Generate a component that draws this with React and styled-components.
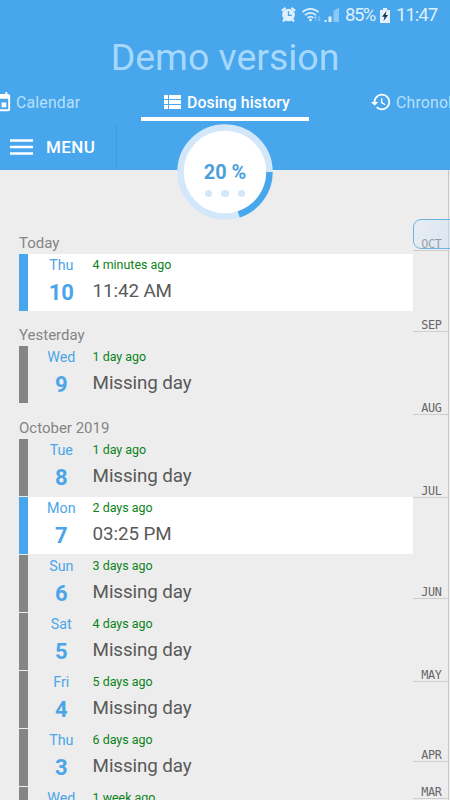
import React from 'react';
import styled, { createGlobalStyle } from 'styled-components';

const BLUE = '#47a6ec';

const Global = createGlobalStyle`
  * { box-sizing: border-box; }
  body { margin: 0; background: #ededed; font-family: Roboto, "Liberation Sans", sans-serif; }
`;

const Screen = styled.div`
  position: relative;
  width: 450px;
  height: 800px;
  overflow: hidden;
  background: #ededed;
`;

const Header = styled.header`
  height: 170px;
  background: ${BLUE};
  color: #fff;
`;

const StatusBar = styled.div`
  display: flex;
  align-items: center;
  height: 30px;
  padding-left: 280px;
  color: #dff0fd;
  svg { flex: none; display: block; }
`;

const StatusText = styled.span`
  width: ${(p) => p.$width}px;
  margin-left: ${(p) => p.$gap}px;
  font-size: 18.5px;
  line-height: 30px;
  letter-spacing: ${(p) => p.$spacing}px;
  white-space: nowrap;
`;

const Title = styled.h1`
  margin: 0;
  height: 57px;
  text-align: center;
  font-size: 37.5px;
  font-weight: 400;
  line-height: 55px;
  letter-spacing: -0.04px;
  color: #a6d8fc;
`;

const Tabs = styled.nav`
  display: grid;
  grid-template-columns: 141px 168px 141px;
  height: 34px;
`;

const Tab = styled.div`
  display: flex;
  align-items: center;
  gap: ${(p) => p.$gap}px;
  min-width: 0;
  overflow: hidden;
  padding-left: ${(p) => p.$indent || 0}px;
  border-bottom: 4px solid ${(p) => (p.$active ? '#fff' : 'transparent')};
  font-size: 15.8px;
  font-weight: ${(p) => (p.$active ? 500 : 400)};
  letter-spacing: ${(p) => (p.$active ? 0.1 : 0.2)}px;
  white-space: nowrap;
  color: ${(p) => (p.$active ? '#fff' : '#b9e0fb')};
  svg { flex: none; display: block; fill: #fff; }
`;

const TabLabel = styled.span`
  line-height: 20px;
  padding-top: 2px;
`;

const CutIcon = styled.span`
  margin: 0 0 0 -10px;
`;

const MenuButton = styled.div`
  display: flex;
  align-items: center;
  gap: 13px;
  width: 117px;
  height: 46px;
  margin-top: 3px;
  padding-left: 10px;
  border-right: 1px solid #3f9ce2;
  font-size: 17px;
  font-weight: 500;
  letter-spacing: 0.4px;
`;

const Ring = styled.div`
  position: absolute;
  left: 177px;
  top: 124px;
  width: 96px;
  height: 96px;
  display: flex;
  flex-direction: column;
  align-items: center;
  color: #4a9fdb;
  svg { position: absolute; inset: 0; }
`;

const RingValue = styled.span`
  position: relative;
  margin-top: 34px;
  font-size: 19.9px;
  font-weight: 700;
  line-height: 30px;
`;

const Dots = styled.div`
  position: relative;
  display: flex;
  gap: 9px;
  margin-top: 2px;
`;

const Dot = styled.i`
  width: 7.4px;
  height: 7.4px;
  border-radius: 50%;
  background: #d3e7fa;
`;

const Content = styled.main`
  display: flex;
  height: 630px;
`;

const List = styled.div`
  width: 394px;
  margin-left: 19px;
  padding-top: 49px;
`;

const SectionTitle = styled.h2`
  margin: 0;
  height: ${(p) => p.$height}px;
  padding-top: ${(p) => p.$height - 22}px;
  font-size: 15px;
  font-weight: 400;
  line-height: 22px;
  color: #858585;
`;

const Row = styled.div`
  display: flex;
  height: 57px;
  margin-bottom: 1px;
  border-left: 9px solid ${(p) => (p.$taken ? BLUE : '#858585')};
  background: ${(p) => (p.$taken ? '#fff' : 'transparent')};
`;

const DayBox = styled.div`
  display: flex;
  flex-direction: column;
  align-items: center;
  width: 64.6px;
  padding-left: 2px;
  color: #4ba5e8;
`;

const Weekday = styled.span`
  font-size: 14.3px;
  line-height: 23px;
`;

const DayNumber = styled.span`
  font-size: 22px;
  font-weight: 700;
  line-height: 32px;
`;

const Info = styled.div`
  display: flex;
  flex-direction: column;
`;

const Ago = styled.span`
  font-size: 12.45px;
  line-height: 22px;
  color: #0b8220;
`;

const Entry = styled.span`
  font-size: 18.8px;
  line-height: 31px;
  letter-spacing: -0.1px;
  color: #595959;
`;

const Timeline = styled.aside`
  position: relative;
  width: 36px;
  border-right: 1px solid #c9c9c9;
  padding-top: 49px;
`;

const Month = styled.div`
  height: ${(p) => p.$height}px;
  display: flex;
  align-items: flex-end;
  justify-content: flex-end;
  padding: 0 6.5px 0 0;
  border-bottom: 1px solid #cecece;
  font-family: "DejaVu Sans Mono", monospace;
  font-size: 11.8px;
  line-height: 12px;
  letter-spacing: -0.35px;
  color: #666;
`;

const Thumb = styled.div`
  position: absolute;
  left: 0;
  top: 49px;
  width: 45px;
  height: 30px;
  border: 1.5px solid #6fb3e3;
  border-radius: 8px;
  background: linear-gradient(100deg, rgba(225, 236, 247, 0.5), rgba(190, 219, 245, 0.4));
`;

const PATHS = {
  event: 'M17 12h-5v5h5v-5zM16 1v2H8V1H6v2H5c-1.11 0-1.99.9-1.99 2L3 19c0 1.1.89 2 2 2h14c1.1 0 2-.9 2-2V5c0-1.1-.9-2-2-2h-1V1h-2zm3 18H5V8h14v11z',
  list: 'M4 14h4v-4H4v4zm0 5h4v-4H4v4zM4 9h4V5H4v4zm5 5h12v-4H9v4zm0 5h12v-4H9v4zM9 5v4h12V5H9z',
  history: 'M13 3c-4.97 0-9 4.03-9 9H1l3.89 3.89.07.14L9 12H6c0-3.87 3.13-7 7-7s7 3.13 7 7-3.13 7-7 7c-1.93 0-3.68-.79-4.94-2.06l-1.42 1.42C8.27 19.99 10.51 21 13 21c4.97 0 9-4.03 9-9s-4.03-9-9-9zm-1 5v5l4.28 2.54.72-1.21-3.5-2.08V8H12z',
};

const Icon = ({ name, size }) => (
  <svg width={size} height={size} viewBox="0 0 24 24"><path d={PATHS[name]} /></svg>
);

const StatusIcons = () => (
  <svg width="60" height="30" viewBox="280 0 60 30" fill="none">
    <circle cx="288.5" cy="15" r="6.3" fill="#dff0fd" />
    <path d="M281.8 10.8l3.7-3M295.200 10.8l-3.700-3M284.500 19.500l-1.500 2M292.500 19.500l1.500 2" stroke="#dff0fd" strokeWidth="2.200" />
    <path d="M288.5 11.2v4.2h3.2" stroke={BLUE} strokeWidth="1.3" />
    <path d="M302.500 12.200c4.500-4.500 11.500-4.500 16 0M305 15.200c3.200-3.200 7.800-3.200 11 0M307.500 18c1.800-1.800 4.200-1.800 6 0" stroke="#dff0fd" strokeWidth="1.700" />
    <circle cx="310.500" cy="20" r="1.400" fill="#dff0fd" />
    <path d="M315.500 20.500v-4m-1.500 1.500l1.500-1.700 1.500 1.700M319 16v4.500m-1.500-1.500l1.500 1.700 1.500-1.700" stroke="#8dcaf6" strokeWidth="0.9" />
    <path d="M324.500 22v-2h2v2zM328.500 22v-5.500h3V22z" fill="#dff0fd" />
    <path d="M333.500 22V11l5.500-3.500V22z" fill="#8cc8f5" />
  </svg>
);

const BatteryIcon = () => (
  <svg width="10" height="15" viewBox="0 0 10 15">
    <path d="M3 0h4v2h3v13H0V2h3z" fill="#e4f2fd" />
    <path d="M6.500 3L2 8.700h2.500L3.500 13 8 7H5.500z" fill="#15344d" />
  </svg>
);

const MenuIcon = () => (
  <svg width="23" height="16" viewBox="0 0 23 16">
    <path d="M0 1.500h23M0 8h23M0 14.500h23" stroke="#fff" strokeWidth="2.300" />
  </svg>
);

const SECTIONS = [
  { title: 'Today', height: 35, rows: [['Thu', 10, '4 minutes ago', '11:42 AM', true]] },
  { title: 'Yesterday', height: 34, rows: [['Wed', 9, '1 day ago', 'Missing day']] },
  {
    title: 'October 2019',
    height: 35,
    rows: [
      ['Tue', 8, '1 day ago', 'Missing day'],
      ['Mon', 7, '2 days ago', '03:25 PM', true],
      ['Sun', 6, '3 days ago', 'Missing day'],
      ['Sat', 5, '4 days ago', 'Missing day'],
      ['Fri', 4, '5 days ago', 'Missing day'],
      ['Thu', 3, '6 days ago', 'Missing day'],
      ['Wed', 2, '1 week ago', 'Missing day'],
    ],
  },
];

const MONTHS = [['OCT', 32], ['SEP', 81], ['AUG', 83], ['JUL', 83], ['JUN', 101], ['MAY', 83], ['APR', 80], ['MAR', 37]];

export default function App() {
  return (
    <Screen>
      <Global />
      <Header>
        <StatusBar>
          <StatusIcons />
          <StatusText $width={35} $gap={5} $spacing={-1.5}>85%</StatusText>
          <BatteryIcon />
          <StatusText $width={42} $gap={6} $spacing={-1}>11:47</StatusText>
        </StatusBar>
        <Title>Demo version</Title>
        <Tabs>
          <Tab $gap={3}>
            <CutIcon><Icon name="event" size={23} /></CutIcon>
            <TabLabel>Calendar</TabLabel>
          </Tab>
          <Tab $active $indent={19} $gap={3}>
            <Icon name="list" size={24} />
            <TabLabel>Dosing history</TabLabel>
          </Tab>
          <Tab $indent={61} $gap={4}>
            <Icon name="history" size={22} />
            <TabLabel>Chronology</TabLabel>
          </Tab>
        </Tabs>
        <MenuButton><MenuIcon />MENU</MenuButton>
      </Header>
      <Content>
        <List>
          {SECTIONS.map((s) => (
            <React.Fragment key={s.title}>
              <SectionTitle $height={s.height}>{s.title}</SectionTitle>
              {s.rows.map(([day, num, ago, text, taken]) => (
                <Row key={num} $taken={taken}>
                  <DayBox>
                    <Weekday>{day}</Weekday>
                    <DayNumber>{num}</DayNumber>
                  </DayBox>
                  <Info>
                    <Ago>{ago}</Ago>
                    <Entry>{text}</Entry>
                  </Info>
                </Row>
              ))}
            </React.Fragment>
          ))}
        </List>
        <Timeline>
          <Thumb />
          {MONTHS.map(([m, h]) => <Month key={m} $height={h}>{m}</Month>)}
        </Timeline>
      </Content>
      <Ring>
        <svg width="96" height="96" viewBox="0 0 96 96">
          <circle cx="48" cy="48" r="44.500" fill="#fff" stroke="#d3e7fa" strokeWidth="6.500" />
          <path d="M92.500 48A44.500 44.500 0 0 1 61.750 90.320" fill="none" stroke={BLUE} strokeWidth="6.500" />
        </svg>
        <RingValue>20 %</RingValue>
        <Dots><Dot /><Dot /><Dot /></Dots>
      </Ring>
    </Screen>
  );
}
